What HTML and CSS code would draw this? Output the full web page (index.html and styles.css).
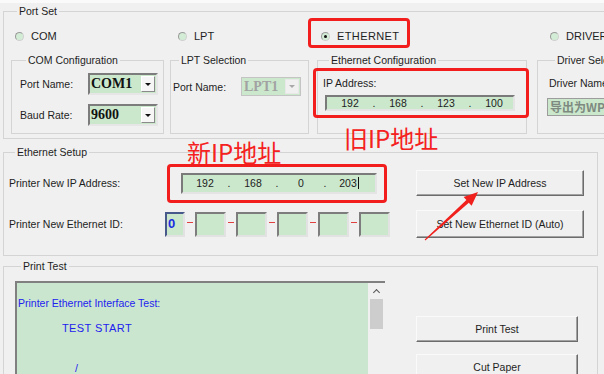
FILE: index.html
```html
<!DOCTYPE html>
<html lang="zh-CN">
<head>
    <meta charset="UTF-8">
    <title>Printer Ethernet Setup</title>
    <link rel="stylesheet" href="styles.css">
</head>
<body>
    <div class="window">
        <fieldset class="group port-set">
            <legend>Port Set</legend>
            <div class="port-row">
                <label class="radio r-com"><span class="dot"></span>COM</label>
                <label class="radio r-lpt"><span class="dot"></span>LPT</label>
                <label class="radio r-eth"><span class="dot on"></span>ETHERNET</label>
                <label class="radio r-drv"><span class="dot"></span>DRIVER</label>
            </div>
            <div class="sub-row">
                <fieldset class="group sub com-cfg">
                    <legend>COM Configuration</legend>
                    <div class="field-row">
                        <span class="lbl">Port Name:</span>
                        <div class="combo"><span class="combo-val">COM1</span><span class="combo-btn"></span></div>
                    </div>
                    <div class="field-row">
                        <span class="lbl">Baud Rate:</span>
                        <div class="combo"><span class="combo-val">9600</span><span class="combo-btn"></span></div>
                    </div>
                </fieldset>
                <fieldset class="group sub lpt-sel">
                    <legend>LPT Selection</legend>
                    <div class="field-row">
                        <span class="lbl">Port Name:</span>
                        <div class="combo disabled"><span class="combo-val">LPT1</span><span class="combo-btn"></span></div>
                    </div>
                </fieldset>
                <fieldset class="group sub eth-cfg">
                    <legend>Ethernet Configuration</legend>
                    <div class="lbl ip-lbl">IP Address:</div>
                    <div class="ip-box old-ip">
                        <span class="seg">192</span><span class="sep">.</span>
                        <span class="seg">168</span><span class="sep">.</span>
                        <span class="seg">123</span><span class="sep">.</span>
                        <span class="seg">100</span>
                    </div>
                </fieldset>
                <fieldset class="group sub drv-sel">
                    <legend>Driver Selection</legend>
                    <div class="lbl drv-lbl">Driver Name:</div>
                    <div class="drv-box">导出为WPS PDF</div>
                </fieldset>
            </div>
        </fieldset>

        <fieldset class="group eth-setup">
            <legend>Ethernet Setup</legend>
            <div class="setup-row">
                <span class="lbl lbl-ip">Printer New IP Address:</span>
                <div class="ip-box new-ip">
                    <span class="seg">192</span><span class="sep">.</span>
                    <span class="seg">168</span><span class="sep">.</span>
                    <span class="seg">0</span><span class="sep">.</span>
                    <span class="seg"><span class="caret">203</span></span>
                </div>
                <button class="btn">Set New IP Address</button>
            </div>
            <div class="setup-row row-id">
                <span class="lbl lbl-id">Printer New Ethernet ID:</span>
                <div class="id-boxes">
                    <span class="id-box first">0</span><span class="dash"></span>
                    <span class="id-box"></span><span class="dash"></span>
                    <span class="id-box"></span><span class="dash"></span>
                    <span class="id-box"></span><span class="dash"></span>
                    <span class="id-box"></span><span class="dash"></span>
                    <span class="id-box"></span>
                </div>
                <button class="btn tall">Set New Ethernet ID (Auto)</button>
            </div>
        </fieldset>

        <fieldset class="group print-test">
            <legend>Print Test</legend>
            <div class="print-row">
                <div class="log">
                    <div class="log-body">
                        <div class="log-title">Printer Ethernet Interface Test:</div>
                        <div class="log-line">TEST START</div>
                        <div class="log-slash">/</div>
                    </div>
                    <div class="scrollbar">
                        <span class="arrow-up"></span>
                        <span class="thumb"></span>
                    </div>
                </div>
                <div class="print-btns">
                    <button class="btn small">Print Test</button>
                    <button class="btn small">Cut Paper</button>
                </div>
            </div>
        </fieldset>

        <!-- red annotations drawn on top of the screenshot -->
        <div class="mark mark-eth"></div>
        <div class="mark mark-old"></div>
        <div class="mark mark-new"></div>
        <div class="note note-old">旧IP地址</div>
        <div class="note note-new">新IP地址</div>
        <svg class="arrow" width="62" height="56" viewBox="0 0 62 56">
            <polygon points="4.7,51.6 46.4,12.1 43.6,9 58,4 51.6,17.8 48.8,14.7 5.3,52.4" fill="#f0201c"/>
        </svg>
    </div>
</body>
</html>
```

FILE: styles.css
```css
* {
    box-sizing: border-box;
}
body {
    margin: 0;
    background-color: #f0f0f0;
    font-family: "Liberation Sans", Arial, sans-serif;
    font-size: 10.5px;
    color: #1e1e1e;
    overflow: hidden;
}
.window {
    position: relative;
    width: 604px;
    height: 374px;
    padding: 5px 0 0 3px;
    overflow: hidden;
    box-shadow: inset 0 3px #fafafa;
}
.group {
    margin: 0;
    padding: 0;
    min-width: 0;
    border: 1px solid #d4d4d4;
}
legend {
    padding: 0 2px;
    margin-left: 6px;
    line-height: 12px;
    font-size: 10.5px;
}
.lbl {
    line-height: 12px;
}

/* Port Set */
.port-set {
    width: 640px;
    padding: 12px 0 4px 7px;
}
.port-row {
    display: flex;
    align-items: center;
    height: 14px;
    padding-left: 4px;
    font-size: 11px;
}
.radio {
    display: flex;
    align-items: center;
    gap: 7px;
    flex: none;
}
.r-com { width: 163px; }
.r-lpt { width: 143px; }
.r-eth { width: 229px; letter-spacing: 0.4px; }
.dot {
    width: 9px;
    height: 9px;
    border-radius: 50%;
    border: 1px solid #9a9a9a;
    border-right-color: #d0d0d0;
    border-bottom-color: #d0d0d0;
    background-color: #d3ecd5;
    display: flex;
    align-items: center;
    justify-content: center;
}
.dot.on::after {
    content: "";
    width: 3px;
    height: 3px;
    border-radius: 50%;
    background-color: #111;
}
.sub-row {
    display: flex;
    margin-top: 11px;
}
.sub {
    flex: none;
    height: 80px;
}
.com-cfg {
    width: 153px;
    padding: 7px 0 0 8px;
}
.lpt-sel {
    width: 139px;
    margin-left: 6px;
    padding: 11px 0 0 2px;
}
.eth-cfg {
    width: 210px;
    margin-left: 8px;
    padding: 11px 0 0 5px;
}
.drv-sel {
    width: 110px;
    margin-left: 10px;
    padding: 10px 0 0 11px;
}
.field-row {
    display: flex;
    align-items: center;
    margin-bottom: 9px;
}
.field-row .lbl {
    width: 68px;
}
.combo {
    width: 70px;
    height: 22px;
    display: flex;
    align-items: center;
    border: 2px solid;
    border-color: #7c7c7c #e6e6e6 #e6e6e6 #7c7c7c;
    background-color: #cbe8cd;
}
.combo-val {
    flex: 1;
    padding-left: 1px;
    font-family: "Liberation Serif", serif;
    font-weight: bold;
    font-size: 14px;
    color: #111;
}
.combo-btn {
    width: 14px;
    height: 16px;
    margin-right: 1px;
    background-color: #f6f6f6;
    border: 1px solid;
    border-color: #fff #8a8a8a #8a8a8a #fff;
    display: flex;
    align-items: center;
    justify-content: center;
}
.combo-btn::after {
    content: "";
    border-left: 3px solid transparent;
    border-right: 3px solid transparent;
    border-top: 3px solid #111;
}
.combo.disabled {
    width: 60px;
    height: 19px;
    border: 1px solid #c4c4c4;
}
.combo.disabled .combo-val {
    color: #a2a2a2;
    font-size: 14px;
    padding-left: 2px;
}
.combo.disabled .combo-btn {
    height: 15px;
    border-color: #e8e8e8;
    background-color: #f0f0f0;
}
.combo.disabled .combo-btn::after {
    border-top-color: #a8a8a8;
}

/* IP boxes */
.ip-box {
    display: flex;
    align-items: center;
    background-color: #cbe8cd;
    border: 2px solid;
    border-color: #7a7a7a #e4e4e4 #e4e4e4 #7a7a7a;
    color: #222;
}
.seg {
    width: 36px;
    text-align: center;
}
.sep {
    width: 12px;
    text-align: center;
}
.old-ip {
    width: 190px;
    height: 16px;
    margin: 6px 0 0 2px;
    padding-left: 5px;
}
.new-ip {
    width: 196px;
    height: 21px;
    padding-left: 4px;
}
.caret {
    border-right: 1px solid #111;
    padding-right: 1px;
}
.drv-lbl {
    margin-top: 1px;
}
.drv-box {
    width: 120px;
    height: 18px;
    margin: 9px 0 0 -2px;
    padding-left: 2px;
    background-color: #cbe8cd;
    border: 1px solid #9c9c9c;
    border-right: none;
    font-family: "Noto Sans CJK SC", "Liberation Serif", sans-serif;
    font-weight: bold;
    font-size: 12px;
    line-height: 16px;
    color: #7e8a80;
    white-space: nowrap;
    overflow: hidden;
}

/* Ethernet Setup */
.eth-setup {
    width: 595px;
    margin-top: 7px;
    padding: 12px 13px 17px 5px;
}
.setup-row {
    display: flex;
    align-items: center;
    height: 26px;
}
.row-id {
    height: 28px;
    margin-top: 14px;
}
.lbl-ip { width: 172px; }
.lbl-id { width: 156px; }
.btn {
    margin-left: auto;
    width: 168px;
    height: 26px;
    padding: 0;
    background-color: #f0f0f0;
    border: 1px solid;
    border-color: #fafafa #6c6c6c #6c6c6c #fafafa;
    box-shadow: inset -1px -1px #a2a2a2;
    font-family: "Liberation Sans", Arial, sans-serif;
    font-size: 10.5px;
    color: #1e1e1e;
}
.btn.tall {
    height: 28px;
}
.id-boxes {
    display: flex;
    align-items: center;
}
.id-box {
    width: 31px;
    height: 25px;
    background-color: #cbe8cd;
    border: 2px solid;
    border-color: #7d7d7d #e2e2e2 #e2e2e2 #7d7d7d;
}
.id-box.first {
    width: 20px;
    border-color: #46598a #e2e2e2 #e2e2e2 #46598a;
    font-weight: bold;
    font-size: 13px;
    line-height: 20px;
    color: #1a2ee0;
    padding-left: 1px;
}
.dash {
    width: 10px;
    display: flex;
    justify-content: center;
}
.dash::after {
    content: "";
    width: 6px;
    height: 1px;
    margin-top: -2px;
    background-color: #e04040;
}

/* Print Test */
.print-test {
    width: 595px;
    height: 140px;
    margin-top: 4px;
    padding: 9px 0 0 11px;
}
.print-row {
    display: flex;
}
.log {
    width: 370px;
    height: 130px;
    display: flex;
    border-top: 2px solid #808080;
    border-left: 2px solid #808080;
}
.log-body {
    flex: 1;
    background-color: #cbe6cf;
    padding: 14px 0 0 1px;
    color: #2222ee;
    line-height: 12px;
}
.log-line {
    margin: 13px 0 0 44px;
    font-size: 11px;
    letter-spacing: 0.4px;
}
.log-slash {
    margin: 28px 0 0 57px;
}
.scrollbar {
    width: 17px;
    background-color: #f0f0f0;
    display: flex;
    flex-direction: column;
    align-items: center;
}
.arrow-up {
    width: 5px;
    height: 5px;
    margin-top: 7px;
    border-left: 1.5px solid #555;
    border-top: 1.5px solid #555;
    transform: rotate(45deg);
}
.thumb {
    width: 13px;
    height: 30px;
    margin-top: 4px;
    background-color: #cdcdcd;
}
.print-btns {
    margin: 35px 0 0 31px;
    display: flex;
    flex-direction: column;
    gap: 12px;
}
.btn.small {
    width: 162px;
}

/* annotations */
.mark {
    position: absolute;
    border: 3px solid #f21d1d;
    border-radius: 4px;
}
.mark-eth { left: 308px; top: 18px; width: 102px; height: 30px; }
.mark-old { left: 313px; top: 68px; width: 216px; height: 50px; }
.mark-new { left: 167px; top: 164px; width: 220px; height: 39px; }
.note {
    position: absolute;
    font-family: "Noto Sans CJK SC", sans-serif;
    font-size: 24px;
    line-height: 28px;
    color: #f52020;
}
.note-old { left: 344px; top: 124px; }
.note-new { left: 187px; top: 138px; }
.arrow {
    position: absolute;
    left: 420px;
    top: 188px;
}
```
